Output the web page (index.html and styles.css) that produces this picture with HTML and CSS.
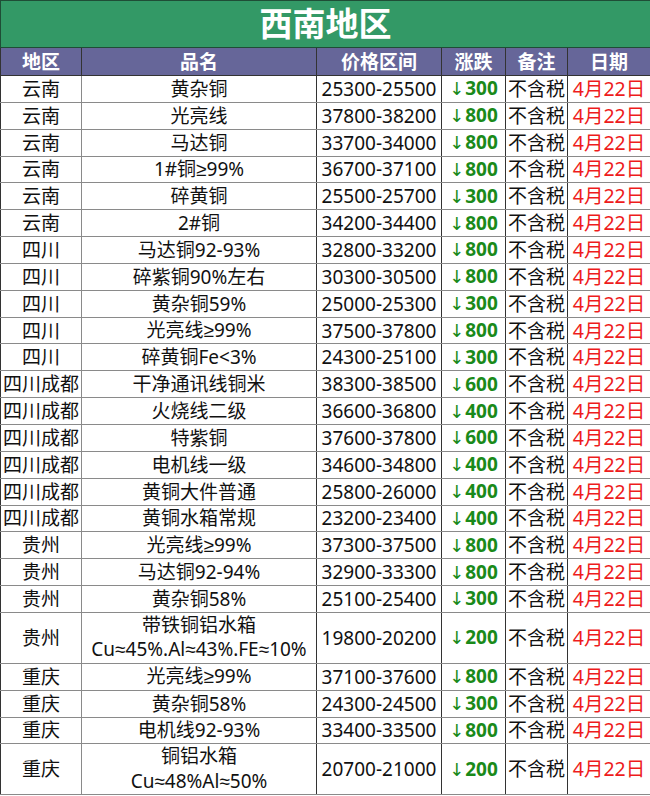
FILE: index.html
```html
<!DOCTYPE html>
<html lang="zh">
<head>
<meta charset="utf-8">
<link rel="stylesheet" href="styles.css">
</head>
<body>
<table class="sheet">
<colgroup>
<col class="c-area"><col class="c-name"><col class="c-price"><col class="c-chg"><col class="c-note"><col class="c-date">
</colgroup>
<thead>
<tr class="title"><th colspan="6">西南地区</th></tr>
<tr class="head"><th>地区</th><th>品名</th><th>价格区间</th><th>涨跌</th><th>备注</th><th>日期</th></tr>
</thead>
<tbody>
<tr><td>云南</td><td>黄杂铜</td><td>25300-25500</td><td class="chg"><span class="arr">↓</span>300</td><td>不含税</td><td class="date">4月22日</td></tr>
<tr><td>云南</td><td>光亮线</td><td>37800-38200</td><td class="chg"><span class="arr">↓</span>800</td><td>不含税</td><td class="date">4月22日</td></tr>
<tr><td>云南</td><td>马达铜</td><td>33700-34000</td><td class="chg"><span class="arr">↓</span>800</td><td>不含税</td><td class="date">4月22日</td></tr>
<tr><td>云南</td><td>1#铜<span class="sym">≥</span>99%</td><td>36700-37100</td><td class="chg"><span class="arr">↓</span>800</td><td>不含税</td><td class="date">4月22日</td></tr>
<tr><td>云南</td><td>碎黄铜</td><td>25500-25700</td><td class="chg"><span class="arr">↓</span>300</td><td>不含税</td><td class="date">4月22日</td></tr>
<tr><td>云南</td><td>2#铜</td><td>34200-34400</td><td class="chg"><span class="arr">↓</span>800</td><td>不含税</td><td class="date">4月22日</td></tr>
<tr><td>四川</td><td>马达铜92-93%</td><td>32800-33200</td><td class="chg"><span class="arr">↓</span>800</td><td>不含税</td><td class="date">4月22日</td></tr>
<tr><td>四川</td><td>碎紫铜90%左右</td><td>30300-30500</td><td class="chg"><span class="arr">↓</span>800</td><td>不含税</td><td class="date">4月22日</td></tr>
<tr><td>四川</td><td>黄杂铜59%</td><td>25000-25300</td><td class="chg"><span class="arr">↓</span>300</td><td>不含税</td><td class="date">4月22日</td></tr>
<tr><td>四川</td><td>光亮线<span class="sym">≥</span>99%</td><td>37500-37800</td><td class="chg"><span class="arr">↓</span>800</td><td>不含税</td><td class="date">4月22日</td></tr>
<tr><td>四川</td><td>碎黄铜Fe&lt;3%</td><td>24300-25100</td><td class="chg"><span class="arr">↓</span>300</td><td>不含税</td><td class="date">4月22日</td></tr>
<tr><td>四川成都</td><td>干净通讯线铜米</td><td>38300-38500</td><td class="chg"><span class="arr">↓</span>600</td><td>不含税</td><td class="date">4月22日</td></tr>
<tr><td>四川成都</td><td>火烧线二级</td><td>36600-36800</td><td class="chg"><span class="arr">↓</span>400</td><td>不含税</td><td class="date">4月22日</td></tr>
<tr><td>四川成都</td><td>特紫铜</td><td>37600-37800</td><td class="chg"><span class="arr">↓</span>600</td><td>不含税</td><td class="date">4月22日</td></tr>
<tr><td>四川成都</td><td>电机线一级</td><td>34600-34800</td><td class="chg"><span class="arr">↓</span>400</td><td>不含税</td><td class="date">4月22日</td></tr>
<tr><td>四川成都</td><td>黄铜大件普通</td><td>25800-26000</td><td class="chg"><span class="arr">↓</span>400</td><td>不含税</td><td class="date">4月22日</td></tr>
<tr><td>四川成都</td><td>黄铜水箱常规</td><td>23200-23400</td><td class="chg"><span class="arr">↓</span>400</td><td>不含税</td><td class="date">4月22日</td></tr>
<tr><td>贵州</td><td>光亮线<span class="sym">≥</span>99%</td><td>37300-37500</td><td class="chg"><span class="arr">↓</span>800</td><td>不含税</td><td class="date">4月22日</td></tr>
<tr><td>贵州</td><td>马达铜92-94%</td><td>32900-33300</td><td class="chg"><span class="arr">↓</span>800</td><td>不含税</td><td class="date">4月22日</td></tr>
<tr><td>贵州</td><td>黄杂铜58%</td><td>25100-25400</td><td class="chg"><span class="arr">↓</span>300</td><td>不含税</td><td class="date">4月22日</td></tr>
<tr class="tall"><td>贵州</td><td><div>带铁铜铝水箱</div><div>Cu<span class="sym">≈</span>45%.Al<span class="sym">≈</span>43%.FE<span class="sym">≈</span>10%</div></td><td>19800-20200</td><td class="chg"><span class="arr">↓</span>200</td><td>不含税</td><td class="date">4月22日</td></tr>
<tr><td>重庆</td><td>光亮线<span class="sym">≥</span>99%</td><td>37100-37600</td><td class="chg"><span class="arr">↓</span>800</td><td>不含税</td><td class="date">4月22日</td></tr>
<tr><td>重庆</td><td>黄杂铜58%</td><td>24300-24500</td><td class="chg"><span class="arr">↓</span>300</td><td>不含税</td><td class="date">4月22日</td></tr>
<tr><td>重庆</td><td>电机线92-93%</td><td>33400-33500</td><td class="chg"><span class="arr">↓</span>800</td><td>不含税</td><td class="date">4月22日</td></tr>
<tr class="tall"><td>重庆</td><td><div>铜铝水箱</div><div>Cu<span class="sym">≈</span>48%Al<span class="sym">≈</span>50%</div></td><td>20700-21000</td><td class="chg"><span class="arr">↓</span>200</td><td>不含税</td><td class="date">4月22日</td></tr>
</tbody>
</table>
</body>
</html>
```
FILE: styles.css
```css
html, body {
  margin: 0;
  padding: 0;
  background: #ffffff;
}
.sheet {
  width: 650px;
  table-layout: fixed;
  border-collapse: collapse;
  font-family: "Noto Sans", "Noto Sans CJK SC", sans-serif;
  font-size: 19px;
  color: #111111;
}
.c-area { width: 81px; }
.c-name { width: 235px; }
.c-price { width: 125px; }
.c-chg { width: 64px; }
.c-note { width: 62px; }
.c-date { width: 83px; }
.sheet th, .sheet td {
  padding: 0;
  text-align: center;
  vertical-align: middle;
  white-space: nowrap;
  overflow: hidden;
  border: 1px solid #333333;
}
.sheet td {
  border-top: 1px solid #8a8a8a;
  border-bottom: 1px solid #8a8a8a;
  line-height: 24px;
}
.title th {
  height: 46px;
  background: #339966;
  color: #ffffff;
  font-size: 33px;
  font-weight: 700;
  line-height: 40px;
  border: 1px solid #1f4d36;
}
.head th {
  height: 27px;
  background: #666699;
  color: #ffffff;
  font-weight: 700;
  font-size: 19px;
  line-height: 24px;
  border: 1px solid #333333;
}
.sheet tbody tr { height: 26.85px; }
.sheet tbody tr.tall { height: 51px; }
.sheet tbody tr.tall td { line-height: 24.5px; }
.sheet tbody td:first-child { border-right-color: #8a8a8a; }
.sym {
  font-family: "Liberation Sans", "DejaVu Sans", sans-serif;
}
.chg {
  color: #1a8a1a;
  font-weight: 700;
}
.arr {
  font-family: "DejaVu Sans", "Liberation Sans", sans-serif;
  font-weight: 400;
  font-size: 18px;
  margin-right: 1px;
}
.date {
  color: #ee1c1c;
  font-size: 19.5px;
}
```
